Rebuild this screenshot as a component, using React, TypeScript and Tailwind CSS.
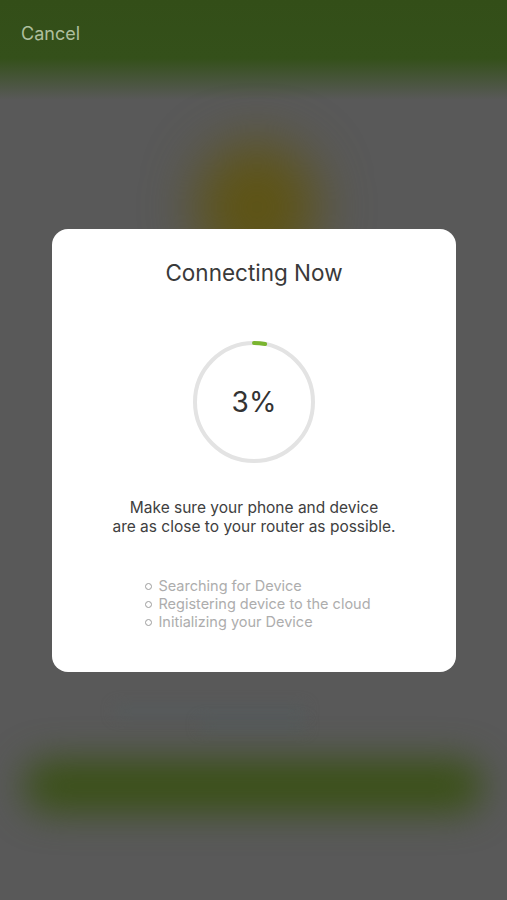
import React from "react";

const steps = [
  "Searching for Device",
  "Registering device to the cloud",
  "Initializing your Device",
];

function Progress({ pct }: { pct: number }) {
  const r = 59;
  const c = 2 * Math.PI * r;
  return (
    <svg width="124" height="124" viewBox="0 0 124 124">
      <circle cx="62" cy="62" r={r} fill="none" stroke="#e3e3e3" strokeWidth="4" />
      <circle
        cx="62"
        cy="62"
        r={r}
        fill="none"
        stroke="#7ab530"
        strokeWidth="4"
        strokeLinecap="round"
        strokeDasharray={`${(c * pct) / 100} ${c}`}
        transform="rotate(-90 62 62)"
      />
      <text
        x="62"
        y="62"
        textAnchor="middle"
        dominantBaseline="central"
        fontSize="28"
        fill="#333333"
        fontFamily="Inter, 'Noto Sans', sans-serif"
      >
        {pct}%
      </text>
    </svg>
  );
}

export default function App() {
  return (
    <div className="relative h-[900px] w-full overflow-hidden bg-[#595959] font-['Inter','Noto_Sans',sans-serif]">
      {/* underlying page, dimmed */}
      <div className="flex h-full flex-col">
        <header className="h-[100px] bg-[linear-gradient(to_bottom,#334e18_0%,#34501a_58%,#595959_100%)] px-[21px] pt-[22px]">
          <span className="text-[18px] leading-[24px] text-[#aebf9e]">Cancel</span>
        </header>
        <div className="flex justify-center pt-[42px]">
          <div className="ml-[6px] h-[130px] w-[120px] rounded-full bg-[#5e5416] blur-[26px]" />
        </div>
        <div className="flex-1" />
        <div className="flex flex-col items-start gap-[4px] pl-[115px] pb-[30px]">
          <div className="h-[10px] w-[190px] rounded-full bg-[#555b5c] blur-[7px]" />
          <div className="ml-[85px] h-[10px] w-[105px] rounded-full bg-[#555b5c] blur-[7px]" />
        </div>
        <div className="px-[24px]">
          <div className="h-[52px] rounded-full bg-[#3a5016] blur-[18px]" />
        </div>
        <div className="h-[88px]" />
      </div>

      {/* modal */}
      <div className="absolute left-[52px] top-[229px] flex h-[443px] w-[404px] flex-col items-center rounded-[16px] bg-white pt-[30px]">
        <h1 className="text-[22.5px] leading-[28px] font-normal text-[#3a3a3a]">Connecting Now</h1>
        <div className="mt-[53px]">
          <Progress pct={3} />
        </div>
        <p className="mt-[34px] text-center text-[15.5px] leading-[19px] text-[#404040]">
          Make sure your phone and device
          <br />
          are as close to your router as possible.
        </p>
        <ul className="mt-[41px] flex flex-col pl-[8px]">
          {steps.map((s) => (
            <li key={s} className="flex items-center gap-[6px] text-[14.5px] leading-[18px] text-[#adadad]">
              <span className="h-[7px] w-[7px] rounded-full border-[1.5px] border-[#9d9d9d]" />
              {s}
            </li>
          ))}
        </ul>
      </div>
    </div>
  );
}
